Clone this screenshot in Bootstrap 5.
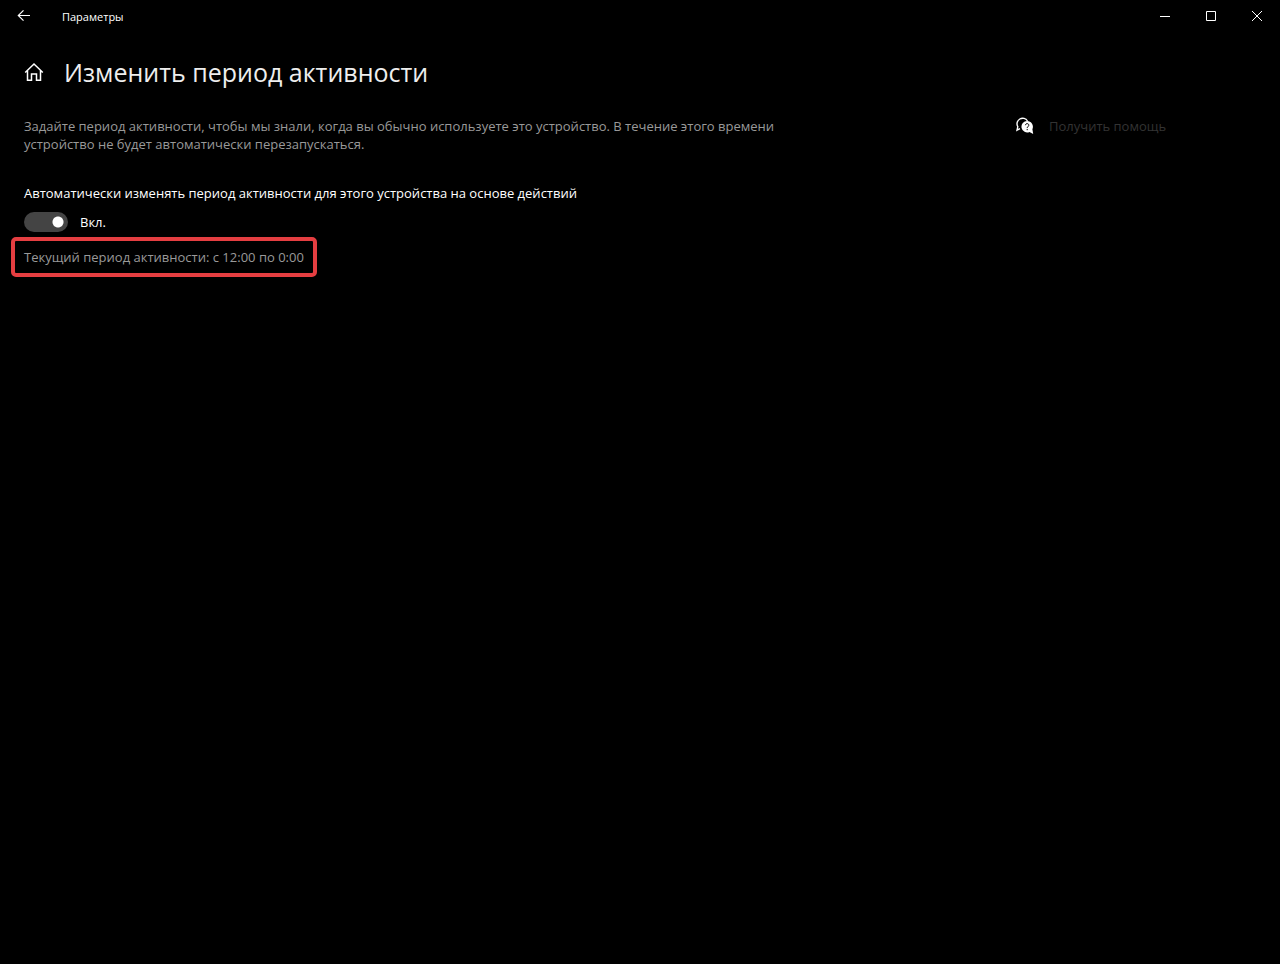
<!DOCTYPE html>
<html lang="ru">
<head>
<meta charset="utf-8">
<meta name="viewport" content="width=device-width, initial-scale=1">
<title>Параметры</title>
<link href="https://cdn.jsdelivr.net/npm/bootstrap@5.3.0/dist/css/bootstrap.min.css" rel="stylesheet">
<style>
  body { background: #000; color: #fff; font-family: "Segoe UI", "Open Sans", "Noto Sans", sans-serif; font-size: 13px; line-height: 18px; }
  svg { display: block; }
  .chrome-btn { width: 46px; height: 32px; color: #fff; background: none; border: 0; padding: 0; display: flex; align-items: center; justify-content: center; }
  .back-btn { width: 48px; }
  .app-name { font-size: 11px; line-height: 33px; margin-left: 14px; }
  .title-row { padding-top: 20px; }
  .page-title { font-size: 25px; line-height: 38px; font-weight: 400; color: #eee; }
  .content-row { padding-top: 26px; }
  .dim-text { color: #999; }
  .intro { max-width: 776px; }
  .settings-grid { padding: 0 24px; }
  .help-link { color: #333; text-decoration: none; }
  .help-col { width: 240px; }
  .help-text { margin-left: 15px; }
  .auto-label { margin-top: 31px; }
  .form-switch .form-check-input.win-switch {
    width: 44px; height: 20px; margin: 0; border: 0; float: none; background-color: #444;
    background-image: radial-gradient(circle at center, #fff 5px, transparent 6px);
    background-size: 20px 20px; background-position: left center;
  }
  .form-switch .form-check-input.win-switch:checked { background-position: right center; }
  .switch-row { min-height: 20px; margin-top: 10px; }
  .marked-period { width: fit-content; border: 4px solid #e53e41; border-radius: 5px; padding: 7px 9px; margin: 5px 0 0 -13px; }
</style>
</head>
<body>
<header class="d-flex align-items-start">
  <button type="button" class="chrome-btn back-btn" aria-label="Назад">
    <svg width="14" height="14" viewBox="0 0 14 14" fill="none" stroke="currentColor" stroke-width="1.2"><path d="M13 6.500H1.500M6.500 1.300 1.300 6.500l5.200 5.200"/></svg>
  </button>
  <span class="app-name">Параметры</span>
  <div class="d-flex ms-auto">
    <button type="button" class="chrome-btn" aria-label="Свернуть"><svg width="10" height="10" viewBox="0 0 10 10" stroke="currentColor"><path d="M0 5.500h10"/></svg></button>
    <button type="button" class="chrome-btn" aria-label="Развернуть"><svg width="10" height="10" viewBox="0 0 10 10" fill="none" stroke="currentColor"><path d="M.5.5h9v9h-9z"/></svg></button>
    <button type="button" class="chrome-btn" aria-label="Закрыть"><svg width="10" height="10" viewBox="0 0 10 10" stroke="currentColor"><path d="m0 0 10 10M10 0 0 10"/></svg></button>
  </div>
</header>
<main class="settings-grid">
  <div class="title-row d-flex align-items-center">
    <a href="#" class="text-white" aria-label="Главная">
      <svg width="20" height="20" viewBox="0 0 20 20" fill="none" stroke="currentColor" stroke-width="1.5"><path d="M1.200 10.500 10 2l8.800 8.500M3.500 8.500v9.800h4V12h5v6.300h4V8.500"/></svg>
    </a>
    <h1 class="page-title mb-0 ms-3 ps-1">Изменить период активности</h1>
  </div>
  <div class="content-row d-flex justify-content-between">
    <section>
      <p class="intro dim-text mb-0">Задайте период активности, чтобы мы знали, когда вы обычно используете это устройство. В течение этого времени устройство не будет автоматически перезапускаться.</p>
      <label for="auto-hours" class="auto-label d-block">Автоматически изменять период активности для этого устройства на основе действий</label>
      <div class="switch-row form-check form-switch d-flex align-items-center p-0 mb-0">
        <input class="form-check-input win-switch" type="checkbox" role="switch" id="auto-hours" checked>
        <span class="ms-2 ps-1">Вкл.</span>
      </div>
      <p class="marked-period dim-text mb-0">Текущий период активности: с 12:00 по 0:00</p>
    </section>
    <aside class="help-col">
      <a href="#" class="help-link d-flex align-items-center">
        <svg width="18" height="18" viewBox="0 0 18 18"><path d="M4 11.600 1 13.200l.8-3.500A5.200 5.200 0 1 1 11.500 4" fill="none" stroke="#fff" stroke-width="1.400"/><path d="M11.200 4a5.800 5.800 0 0 1 5.200 8.200l.8 4.800-3.700-2.100A5.700 5.700 0 1 1 11.200 4z" fill="#fff"/><path d="M9.400 8.200c.1-2.200 3.600-2 3.400.1-.1 1.300-1.600 1.300-1.600 2.800M11.200 12v1.200" fill="none" stroke="#000" stroke-width="1"/></svg>
        <span class="help-text">Получить помощь</span>
      </a>
    </aside>
  </div>
</main>
<script src="https://cdn.jsdelivr.net/npm/bootstrap@5.3.0/dist/js/bootstrap.bundle.min.js"></script>
</body>
</html>
